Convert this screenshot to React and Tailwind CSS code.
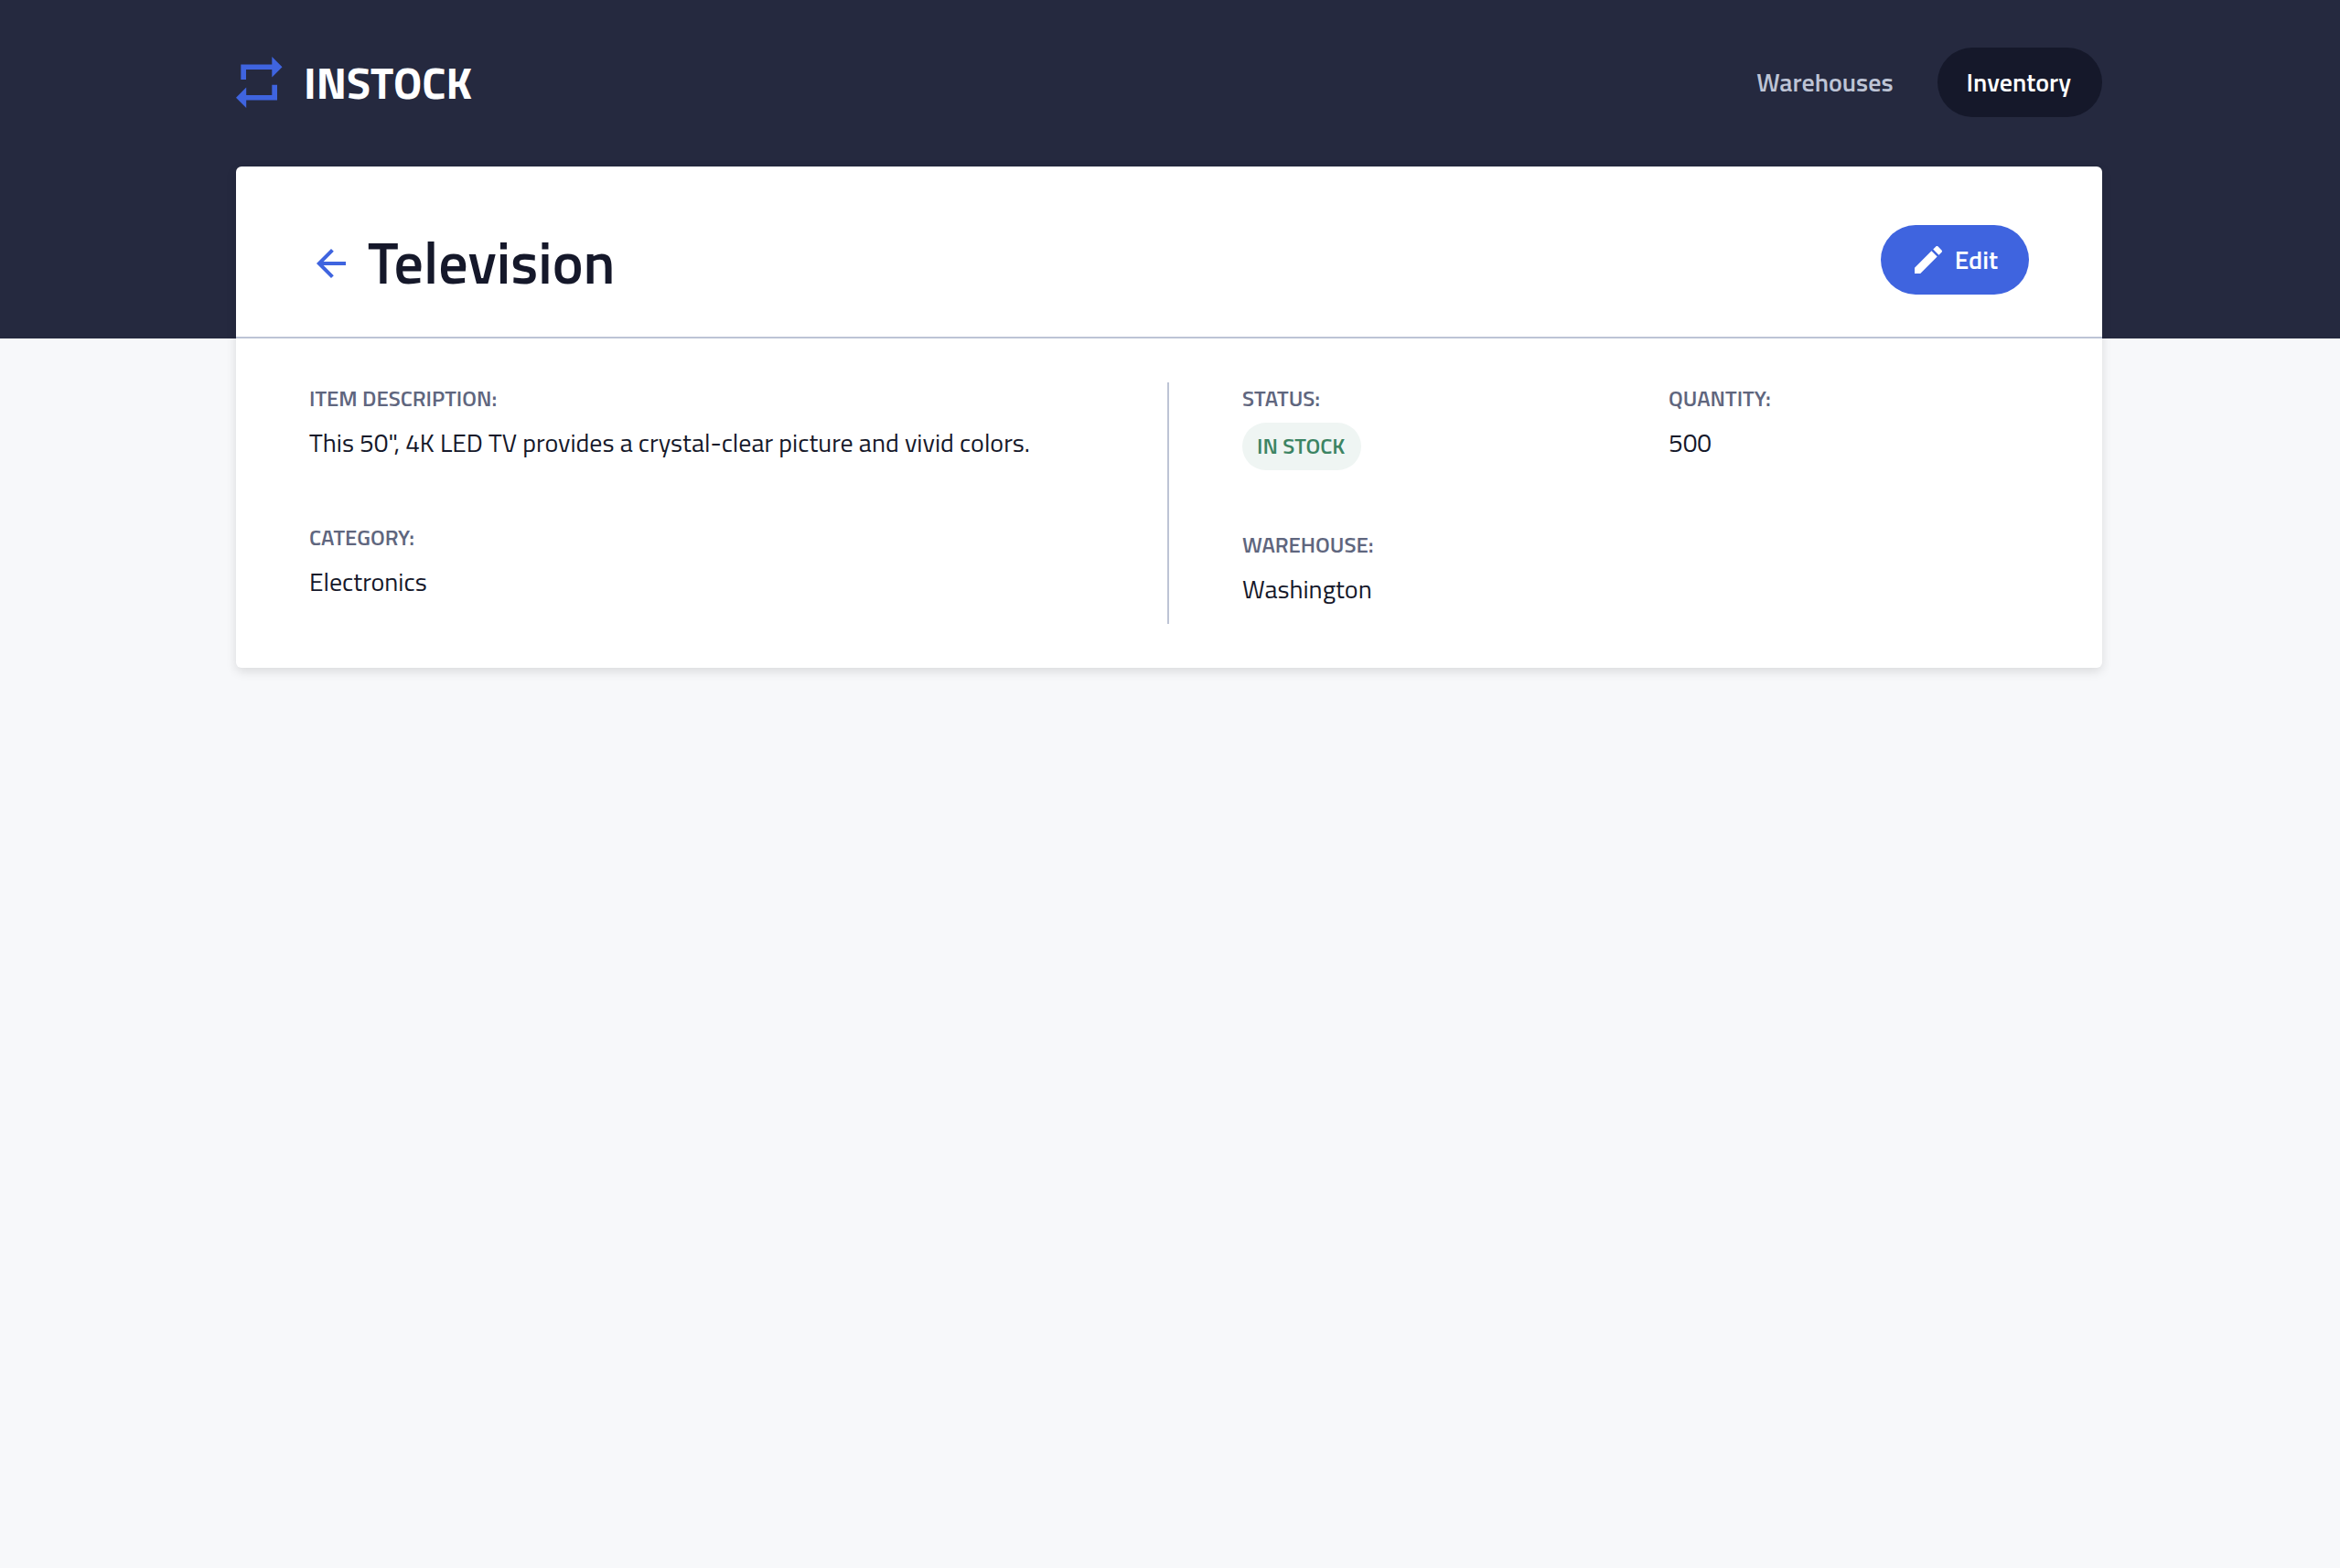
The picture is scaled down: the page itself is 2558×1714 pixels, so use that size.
function LogoMark() {
  return (
    <svg viewBox="0 0 51 56" className="h-14 w-[51px]" fill="#3f64df" aria-hidden="true">
      <path d="M5.3 25V8.5H39.3V0L50.5 11.2L39.3 22.4V14H11V25Z" />
      <path d="M45 30.7V47.5H11.2V56L0 44.8L11.2 33.6V42H39.3V30.7Z" />
    </svg>
  );
}

function BackIcon() {
  return (
    <svg viewBox="0 0 24 24" className="size-12" fill="#3f64df" aria-hidden="true">
      <path d="M20 11H7.83l5.59-5.59L12 4l-8 8 8 8 1.41-1.41L7.83 13H20v-2z" />
    </svg>
  );
}

function EditIcon() {
  return (
    <svg viewBox="0 0 24 24" className="size-10" fill="currentColor" aria-hidden="true">
      <path d="M3 17.25V21h3.75L17.81 9.94l-3.75-3.75L3 17.25zM20.71 7.04c.39-.39.39-1.02 0-1.41l-2.34-2.34c-.39-.39-1.02-.39-1.41 0l-1.83 1.83 3.75 3.75 1.83-1.83z" />
    </svg>
  );
}

function Field({ label, children }) {
  return (
    <div className="flex flex-col items-start gap-2.5">
      <dt className="text-2xl leading-[34px] font-semibold text-[#5f667e]">{label}</dt>
      <dd className="text-[28px] leading-[44px]">{children}</dd>
    </div>
  );
}

function Header() {
  return (
    <header className="flex h-[370px] items-start justify-between bg-[#25293f] pt-[52px] pr-[260px] pl-[258px]">
      <a href="#home" className="flex h-19 items-center gap-[23px]">
        <LogoMark />
        <span className="pt-0.5 text-5xl font-bold text-white">INSTOCK</span>
      </a>
      <nav className="flex gap-4 text-[28px] leading-[44px] font-semibold">
        <a href="#warehouses" className="rounded-full px-8 py-4 text-[#bdc4d5]">
          Warehouses
        </a>
        <a href="#inventory" aria-current="page" className="rounded-full bg-[#15182a] py-4 pr-[34px] pl-8 text-white">
          Inventory
        </a>
      </nav>
    </header>
  );
}

export default function App() {
  return (
    <div className="min-h-screen bg-[#f7f8fa] font-['Titillium_Web','Noto_Sans',sans-serif] text-[#15182a]">
      <Header />
      <main className="-mt-[188px] pr-[260px] pl-[258px]">
        <article className="rounded-md bg-white shadow-[0_4px_12px_rgba(0,0,0,0.12)]">
          <div className="flex items-start justify-between border-b-2 border-[#bdc4d5] px-20 pt-16 pb-[38px]">
            <div className="flex items-center gap-4">
              <button type="button" aria-label="Back to inventory">
                <BackIcon />
              </button>
              <h1 className="pb-1 text-[64px] leading-20 font-semibold">Television</h1>
            </div>
            <button
              type="button"
              className="flex h-19 items-center gap-[9px] rounded-full bg-[#3f64df] pr-[34px] pl-8 text-[28px] leading-[44px] font-semibold text-white"
            >
              <EditIcon />
              Edit
            </button>
          </div>
          <div className="grid grid-cols-2 py-12">
            <dl className="flex flex-col gap-16 border-r-2 border-[#bdc4d5] px-20">
              <Field label="ITEM DESCRIPTION:">
                This 50&quot;, 4K LED TV provides a crystal-clear picture and vivid colors.
              </Field>
              <Field label="CATEGORY:">Electronics</Field>
            </dl>
            <dl className="grid grid-cols-[466px_1fr] items-start gap-y-16 px-20 pb-4">
              <Field label="STATUS:">
                <span className="block rounded-full bg-[#eff5f3] pt-2 pr-[18px] pb-2.5 pl-4 text-2xl leading-[34px] font-semibold text-[#3c8463]">
                  IN STOCK
                </span>
              </Field>
              <Field label="QUANTITY:">500</Field>
              <Field label="WAREHOUSE:">Washington</Field>
            </dl>
          </div>
        </article>
      </main>
    </div>
  );
}
